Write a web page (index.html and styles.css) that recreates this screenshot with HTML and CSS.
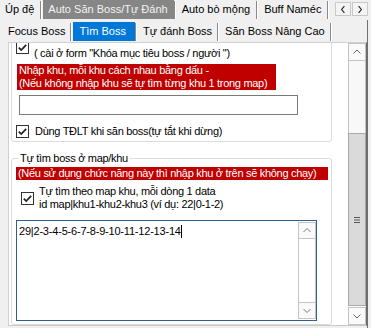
FILE: index.html
```html
<!DOCTYPE html>
<html lang="vi">
<head>
  <meta charset="UTF-8" />
  <title>Auto Săn Boss</title>
  <link rel="stylesheet" href="styles.css">
</head>
<body>

  <div class="tabbar main">
    <div class="tablist">
      <div class="tab">Úp đệ</div>
      <div class="tab idle-active">Auto Săn Boss/Tự Đánh</div>
      <div class="tab">Auto bò mộng</div>
      <div class="tab">Buff Naméc</div>
      <div class="tab">Au</div>
    </div>
    <div class="tabscroll">
      <span class="arrow-btn"><svg width="15" height="13" viewBox="0 0 15 13"><path d="M9 3 L6 6.5 L9 10" fill="none" stroke="#222" stroke-width="1.2"/></svg></span>
      <span class="arrow-btn"><svg width="15" height="13" viewBox="0 0 15 13"><path d="M6 3 L9 6.5 L6 10" fill="none" stroke="#222" stroke-width="1.2"/></svg></span>
    </div>
  </div>

  <div class="page">
    <div class="tabbar sub">
      <div class="tablist">
        <div class="tab">Focus Boss</div>
        <div class="tab active">Tìm Boss</div>
        <div class="tab">Tự đánh Boss</div>
        <div class="tab">Săn Boss Nâng Cao</div>
      </div>
    </div>

    <div class="panel">
      <div class="panel-body">

        <fieldset class="group first">
          <div class="check-row">
            <span class="chk"><svg width="13" height="13" viewBox="0 0 13 13"><rect x="0.5" y="0.5" width="12" height="12" fill="#fff" stroke="#333"/><path d="M2.8 6.6 L5.2 9 L10.2 3.8" fill="none" stroke="#222" stroke-width="1.7"/></svg></span>
            <span class="label"><span class="blank-line"></span>( cài ở form "Khóa mục tiêu boss / người ")</span>
          </div>
          <div class="warn w1">Nhập khu, mỗi khu cách nhau bằng dấu -<br>(Nếu không nhập khu sẽ tự tìm từng khu 1 trong map)</div>
          <input class="textbox" type="text">
          <div class="check-row single">
            <span class="chk"><svg width="13" height="13" viewBox="0 0 13 13"><rect x="0.5" y="0.5" width="12" height="12" fill="#fff" stroke="#333"/><path d="M2.8 6.6 L5.2 9 L10.2 3.8" fill="none" stroke="#222" stroke-width="1.7"/></svg></span>
            <span class="label">Dùng TĐLT khi săn boss(tự tắt khi dừng)</span>
          </div>
        </fieldset>

        <fieldset class="group second">
          <legend>Tự tìm boss ở map/khu</legend>
          <div class="warn w2">(Nếu sử dụng chức năng này thì nhập khu ở trên sẽ không chạy)</div>
          <div class="check-row indent">
            <span class="chk"><svg width="13" height="13" viewBox="0 0 13 13"><rect x="0.5" y="0.5" width="12" height="12" fill="#fff" stroke="#333"/><path d="M2.8 6.6 L5.2 9 L10.2 3.8" fill="none" stroke="#222" stroke-width="1.7"/></svg></span>
            <span class="label">Tự tìm theo map khu, mỗi dòng 1 data<br>id map|khu1-khu2-khu3 (ví dụ: 22|0-1-2)</span>
          </div>
          <div class="memo">
            <div class="memo-text">29|2-3-4-5-6-7-8-9-10-11-12-13-14<span class="caret"></span></div>
            <div class="vbar small">
              <span class="vbtn"><svg width="16" height="15" viewBox="0 0 16 15"><path d="M4.5 9 L8 5.5 L11.5 9" fill="none" stroke="#777" stroke-width="1"/></svg></span>
              <span class="track"></span>
              <span class="vbtn"><svg width="16" height="15" viewBox="0 0 16 15"><path d="M4.5 6 L8 9.5 L11.5 6" fill="none" stroke="#777" stroke-width="1"/></svg></span>
            </div>
          </div>
        </fieldset>

      </div>

      <div class="vbar outer">
        <span class="vbtn"><svg width="16" height="16" viewBox="0 0 16 16"><path d="M4.5 9.5 L8 6 L11.5 9.5" fill="none" stroke="#666" stroke-width="1"/></svg></span>
        <span class="track top"></span>
        <span class="thumb"><svg width="8" height="8" viewBox="0 0 8 8"><path d="M1 1.5 H7 M1 4 H7 M1 6.5 H7" stroke="#555" stroke-width="1.2"/></svg></span>
        <span class="vbtn"><svg width="16" height="16" viewBox="0 0 16 16"><path d="M4.5 6.5 L8 10 L11.5 6.5" fill="none" stroke="#666" stroke-width="1"/></svg></span>
      </div>
    </div>
  </div>

</body>
</html>
```

FILE: styles.css
```css
body {
  margin: 0;
  width: 371px;
  height: 328px;
  overflow: hidden;
  background: #f0f0f0;
  font-family: "Liberation Sans", Arial, sans-serif;
  font-size: 11px;
  letter-spacing: -0.3px;
  color: #000;
}

/* tab strips (flat buttons style) */
.tabbar {
  display: flex;
  height: 20px;
  overflow: hidden;
}

.tablist {
  display: flex;
  flex: 1;
  overflow: hidden;
  white-space: nowrap;
}

.tab {
  position: relative;
  padding: 0 6px 0 5px;
  margin-right: 3px;
  line-height: 19px;
  height: 19px;
  flex-shrink: 0;
  letter-spacing: 0;
}

.tab::after {
  content: "";
  position: absolute;
  right: -2px;
  top: 1px;
  bottom: 0;
  width: 1px;
  background: #8a8a8a;
  border-right: 1px solid #fff;
}

.tab.idle-active {
  background: #868686;
  color: #f2f2f2;
}

.tab.active {
  background: #0078d7;
  color: #fff;
}

.tabscroll {
  display: flex;
  gap: 1px;
  padding: 2px 3px 0 1px;
  background: #f0f0f0;
}

.arrow-btn {
  display: flex;
  width: 16px;
  height: 14px;
  border: 1px solid #c8c8c8;
  background: #f4f4f4;
  box-sizing: border-box;
  align-items: center;
  justify-content: center;
}

.page {
  height: 308px;
  margin-right: 3px;
  border-right: 1px solid #707070;
  padding: 2px 0 0 3px;
}

.tabbar.sub .tab {
  padding: 0 5px;
}

.tabbar.sub .tab.active {
  padding: 0 9px 0 6px;
}

.panel {
  display: flex;
  margin: 0 0 0 5px;
  height: 282px;
  border: 1px solid #d0d0d0;
  border-right: 1px solid #6a6a6a;
  border-bottom: 1px solid #c8c8c8;
  background: #fff;
  overflow: hidden;
}

.panel-body {
  flex: 1;
  overflow: hidden;
  padding: 0 0 0 2px;
}

.group {
  margin: 0;
  border: 1px solid #dcdcdc;
  border-radius: 3px;
  width: 321px;
  box-sizing: border-box;
  padding: 0;
}

.group.first {
  margin-top: -23px;
  padding: 13px 0 3px 0;
}

.group.second {
  margin-top: 10px;
  padding: 0 0 3px 0;
}

.group legend {
  margin-left: 6px;
  padding: 0 2px;
  line-height: 13px;
}

.check-row {
  display: flex;
  align-items: center;
  margin-left: 4px;
  line-height: 13px;
}

.check-row .chk {
  display: flex;
  margin-right: 5px;
}

.blank-line {
  display: block;
  height: 13px;
}

.check-row.single {
  margin-top: 10px;
}

.check-row.single .chk {
  margin-right: 6px;
}

.check-row.indent {
  margin-left: 9px;
  margin-top: 5px;
}

.warn {
  margin: 4px 0 0 5px;
  padding: 0 0 0 2px;
  background: #c00000;
  color: #fff;
  line-height: 13px;
  white-space: nowrap;
  overflow: hidden;
}

.warn.w1 {
  width: 257px;
}

.warn.w2 {
  width: 310px;
  margin: 2px 0 0 4px;
}

.textbox {
  display: block;
  margin: 5px 0 0 7px;
  width: 279px;
  height: 20px;
  box-sizing: border-box;
  border: 1px solid #7a7a7a;
  background: #fff;
  padding: 0;
}

.memo {
  display: flex;
  margin: 9px 0 0 4px;
  width: 301px;
  height: 101px;
  box-sizing: border-box;
  border: 1px solid #305f8c;
  background: #fff;
}

.memo-text {
  flex: 1;
  padding: 4px 0 0 2px;
  line-height: 13px;
  letter-spacing: -0.2px;
}

.caret {
  display: inline-block;
  width: 1px;
  height: 13px;
  background: #000;
  vertical-align: top;
}

/* vertical scroll bars */
.vbar {
  display: flex;
  flex-direction: column;
  background: #fff;
}

.vbar .vbtn {
  display: flex;
  align-items: center;
  justify-content: center;
  border: 1px solid #c4c4c4;
  background: #fafafa;
}

.vbar.small {
  width: 18px;
  margin: 1px 0;
}

.vbar.small .vbtn {
  height: 15px;
}

.vbar.small .track {
  flex: 1;
  border-left: 1px solid #c4c4c4;
  border-right: 1px solid #c4c4c4;
}

.vbar.outer {
  width: 18px;
}

.vbar.outer .vbtn {
  height: 16px;
}

.vbar.outer .track.top {
  height: 72px;
  border-left: 1px solid #c4c4c4;
  border-right: 1px solid #c4c4c4;
  background: #f8f8f8;
}

.vbar.outer .thumb {
  display: flex;
  flex: 1;
  align-items: flex-start;
  justify-content: center;
  padding-top: 82px;
  background: #dadada;
  border: 1px solid #a8a8a8;
  margin-bottom: 1px;
}
```
